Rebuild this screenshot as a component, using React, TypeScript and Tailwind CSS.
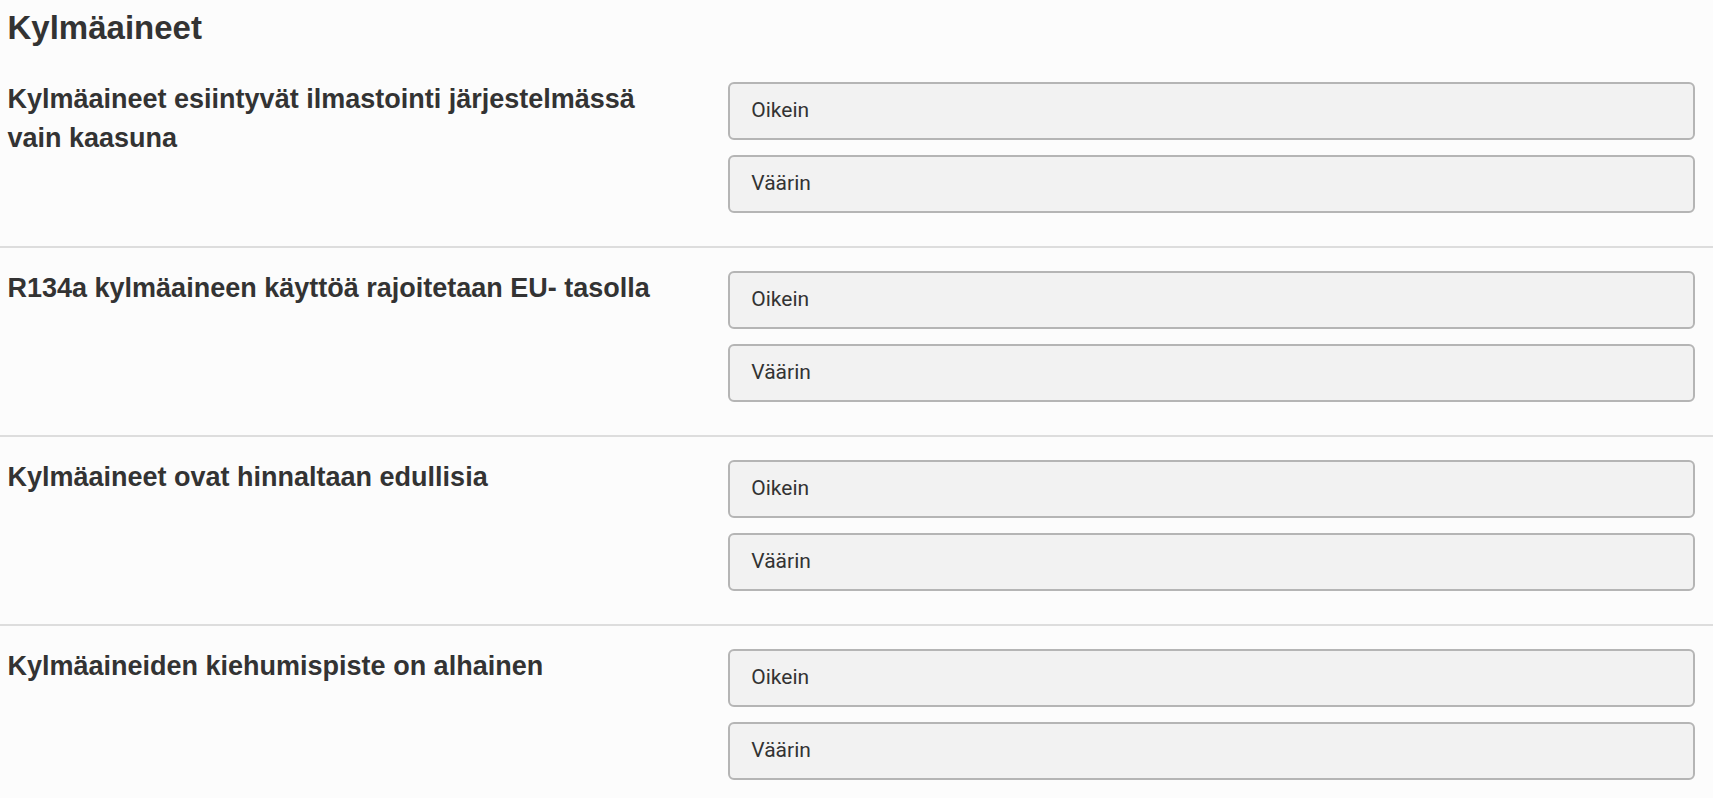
import React from "react";

const questions = [
  "Kylmäaineet esiintyvät ilmastointi järjestelmässä vain kaasuna",
  "R134a kylmäaineen käyttöä rajoitetaan EU- tasolla",
  "Kylmäaineet ovat hinnaltaan edullisia",
  "Kylmäaineiden kiehumispiste on alhainen",
];

function Choice({ label }: { label: string }) {
  return (
    <button
      type="button"
      className="flex h-[58px] w-full items-center rounded-[6px] border-2 border-[#b5b5b5] bg-[#f2f2f2] pl-[21px] text-left font-['Roboto',sans-serif] text-[21px] text-[#333333]"
    >
      {label}
    </button>
  );
}

export default function App() {
  return (
    <div className="h-screen w-full overflow-hidden bg-[#fcfcfc] font-['Liberation_Sans',Arial,sans-serif] text-[#333333]">
      <h2 className="pl-[7.5px] pt-[10px] text-[33px] font-bold leading-[35px]">Kylmäaineet</h2>
      {questions.map((q, i) => (
        <div
          key={i}
          className={
            i === 0
              ? "flex pb-[33.5px] pl-[7.5px] pr-[18.3px] pt-[36.7px]"
              : "flex border-t-2 border-[#dddddd] pb-[33.5px] pl-[7.5px] pr-[18.3px] pt-[22.5px]"
          }
        >
          <div className="w-[720.8px] shrink-0 pr-[50px]">
            <p className="mt-[-1.5px] text-[27px] font-bold leading-[38.6px]">{q}</p>
          </div>
          <div className="flex flex-1 flex-col gap-[15px]">
            <Choice label="Oikein" />
            <Choice label="Väärin" />
          </div>
        </div>
      ))}
    </div>
  );
}
